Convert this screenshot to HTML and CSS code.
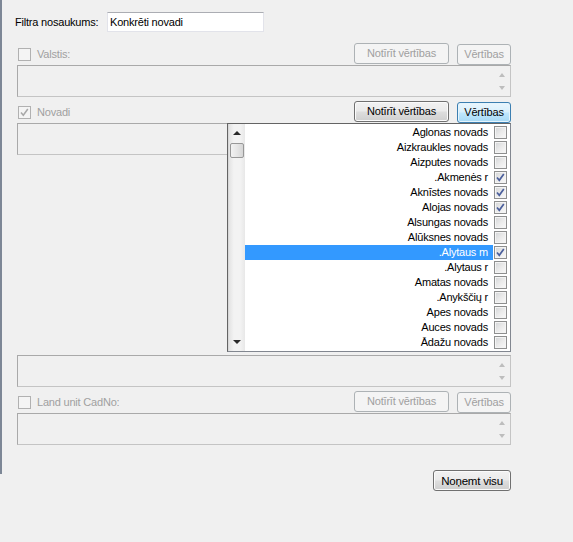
FILE: index.html
```html
<!DOCTYPE html>
<html>
<head>
<meta charset="utf-8">
<link rel="stylesheet" href="styles.css">
</head>
<body>
<div class="page">
  <div class="edge"></div>
  <div class="content">
    <div class="filter-row">
      <span class="filter-label">Filtra nosaukums:</span>
      <div class="input">Konkrēti novadi</div>
    </div>

    <div class="section first">
      <div class="header">
        <span class="cb dis"></span>
        <span class="hlabel dis-text">Valstis:</span>
        <span class="btn dis btn-clear">Notīrīt vērtības</span>
        <span class="btn dis btn-vals">Vērtības</span>
      </div>
      <div class="box"><div class="arrows"><span class="up"></span><span class="down"></span></div></div>
    </div>

    <div class="section">
      <div class="header">
        <span class="cb dis"><svg width="11" height="11" viewBox="0 0 11 11"><path d="M2 5.5 L4.3 8.3 L8.8 2" fill="none" stroke="#a8a8a8" stroke-width="1.5"/></svg></span>
        <span class="hlabel dis-text">Novadi</span>
        <span class="btn en btn-clear">Notīrīt vērtības</span>
        <span class="btn focus btn-vals">Vērtības</span>
      </div>
      <div class="box-wrap">
        <div class="box"></div>
        <div class="popup">
          <div class="vscroll">
            <span class="sarrow up-dark"></span>
            <span class="thumb"></span>
            <span class="sarrow down-dark"></span>
          </div>
          <div class="items">
            <div class="item"><span class="itext">Aglonas novads</span><span class="icb"><span class="cb lst"></span></span></div>
            <div class="item"><span class="itext">Aizkraukles novads</span><span class="icb"><span class="cb lst"></span></span></div>
            <div class="item"><span class="itext">Aizputes novads</span><span class="icb"><span class="cb lst"></span></span></div>
            <div class="item"><span class="itext">.Akmenės r</span><span class="icb"><span class="cb lst"><svg width="11" height="11" viewBox="0 0 11 11"><path d="M2 5.5 L4.3 8.3 L8.8 2" fill="none" stroke="#4b5f9c" stroke-width="1.7"/></svg></span></span></div>
            <div class="item"><span class="itext">Aknīstes novads</span><span class="icb"><span class="cb lst"><svg width="11" height="11" viewBox="0 0 11 11"><path d="M2 5.5 L4.3 8.3 L8.8 2" fill="none" stroke="#4b5f9c" stroke-width="1.7"/></svg></span></span></div>
            <div class="item"><span class="itext">Alojas novads</span><span class="icb"><span class="cb lst"><svg width="11" height="11" viewBox="0 0 11 11"><path d="M2 5.5 L4.3 8.3 L8.8 2" fill="none" stroke="#4b5f9c" stroke-width="1.7"/></svg></span></span></div>
            <div class="item"><span class="itext">Alsungas novads</span><span class="icb"><span class="cb lst"></span></span></div>
            <div class="item"><span class="itext">Alūksnes novads</span><span class="icb"><span class="cb lst"></span></span></div>
            <div class="item sel"><span class="itext">.Alytaus m</span><span class="icb"><span class="cb lst"><svg width="11" height="11" viewBox="0 0 11 11"><path d="M2 5.5 L4.3 8.3 L8.8 2" fill="none" stroke="#4b5f9c" stroke-width="1.7"/></svg></span></span></div>
            <div class="item"><span class="itext">.Alytaus r</span><span class="icb"><span class="cb lst"></span></span></div>
            <div class="item"><span class="itext">Amatas novads</span><span class="icb"><span class="cb lst"></span></span></div>
            <div class="item"><span class="itext">.Anykščių r</span><span class="icb"><span class="cb lst"></span></span></div>
            <div class="item"><span class="itext">Apes novads</span><span class="icb"><span class="cb lst"></span></span></div>
            <div class="item"><span class="itext">Auces novads</span><span class="icb"><span class="cb lst"></span></span></div>
            <div class="item"><span class="itext">Ādažu novads</span><span class="icb"><span class="cb lst"></span></span></div>
          </div>
        </div>
      </div>
    </div>

    <div class="box lower"><div class="arrows"><span class="up"></span><span class="down"></span></div></div>

    <div class="section">
      <div class="header">
        <span class="cb dis"></span>
        <span class="hlabel dis-text">Land unit CadNo:</span>
        <span class="btn dis btn-clear">Notīrīt vērtības</span>
        <span class="btn dis btn-vals">Vērtības</span>
      </div>
      <div class="box"><div class="arrows"><span class="up"></span><span class="down"></span></div></div>
    </div>

    <div class="footer">
      <span class="btn en btn-remove">Noņemt visu</span>
    </div>
  </div>
</div>
</body>
</html>
```

FILE: styles.css
```css
html, body {
  margin: 0;
  padding: 0;
  background: #f0f0f0;
}
body {
  font-family: "Liberation Sans", Arial, sans-serif;
  font-size: 11px;
  letter-spacing: -0.2px;
  color: #000;
  width: 573px;
  height: 542px;
  overflow: hidden;
}
.page {
  display: flex;
  align-items: flex-start;
}
.edge {
  width: 2px;
  height: 474px;
  background: #7d8796;
  flex: none;
}
.content {
  width: 494px;
  padding-left: 15px;
}
.filter-row {
  display: flex;
  align-items: center;
  margin-top: 12px;
  margin-left: -2px;
  height: 20px;
}
.filter-label {
  width: 92px;
}
.input {
  box-sizing: border-box;
  width: 157px;
  height: 20px;
  background: #fff;
  border: 1px solid #e2e3ea;
  border-top-color: #abadb3;
  padding: 2px 0 0 2px;
  line-height: 14px;
}
.section {
  margin-top: 3px;
}
.section.first {
  margin-top: 10px;
}
.header {
  display: flex;
  align-items: center;
  height: 23px;
}
.cb {
  box-sizing: border-box;
  width: 13px;
  height: 13px;
  display: inline-flex;
  align-items: center;
  justify-content: center;
  flex: none;
}
.header .cb {
  margin-left: 1px;
  margin-top: 1px;
}
.cb.dis {
  border: 1px solid #b1b1b1;
  background: #f4f4f4;
}
.cb.lst {
  border: 1px solid #8e8f8f;
  background: linear-gradient(135deg, #d2d4d6 0%, #eaeaea 50%, #fafafa 100%);
  box-shadow: inset 0 0 0 1px #f4f4f4;
}
.hlabel {
  margin-left: 6px;
  margin-top: 1px;
}
.dis-text {
  color: #a0a0a0;
}
.btn {
  box-sizing: border-box;
  height: 21px;
  display: inline-flex;
  align-items: center;
  justify-content: center;
  border-radius: 3px;
  flex: none;
}
.btn-clear {
  margin-left: auto;
  width: 95px;
  margin-top: -1px;
}
.btn-vals {
  margin-left: 8px;
  width: 54px;
  margin-top: 1px;
}
.btn.dis {
  border: 1px solid #adb2b5;
  background: #f4f4f4;
  color: #a0a0a0;
}
.btn.en {
  border: 1px solid #707070;
  background: linear-gradient(#f2f2f2 0%, #ebebeb 45%, #dddddd 55%, #cfcfcf 100%);
  box-shadow: inset 0 0 0 1px #fbfbfb;
}
.btn.focus {
  border: 1px solid #3c7fb1;
  background: linear-gradient(#eaf6fd 0%, #d9f0fc 45%, #bee6fd 55%, #a7d9f5 100%);
  box-shadow: inset 0 0 0 1px #e5f4fc;
}
.box {
  box-sizing: border-box;
  height: 32px;
  border: 1px solid #a9a9a9;
  border-right-color: #c4c4c4;
  border-bottom-color: #c4c4c4;
  background: #f0f0f0;
  display: flex;
  justify-content: flex-end;
}
.box.lower {
  margin-top: 200px;
}
.arrows {
  width: 17px;
  position: relative;
}
.arrows span {
  position: absolute;
  left: 6px;
  width: 0;
  height: 0;
  border-left: 3.5px solid transparent;
  border-right: 3.5px solid transparent;
}
.arrows .up {
  top: 7px;
  border-bottom: 4px solid #bdbdbd;
}
.arrows .down {
  top: 20px;
  border-top: 4px solid #bdbdbd;
}
.box-wrap {
  position: relative;
}
.popup {
  position: absolute;
  top: 0;
  left: 210px;
  box-sizing: border-box;
  width: 284px;
  height: 229px;
  background: #fff;
  border: 1px solid #646464;
  border-right-color: #828790;
  border-bottom-color: #828790;
  display: flex;
}
.vscroll {
  width: 17px;
  flex: none;
  position: relative;
  background: linear-gradient(to right, #e3e3e3 0%, #f3f3f3 30%, #f3f3f3 70%, #e8e8e8 100%);
  border-left: 1px solid #d8d8d8;
  box-sizing: border-box;
}
.sarrow {
  position: absolute;
  left: 4px;
  width: 0;
  height: 0;
  border-left: 4px solid transparent;
  border-right: 4px solid transparent;
}
.up-dark {
  top: 7px;
  border-bottom: 4px solid #2a2a2a;
}
.down-dark {
  bottom: 7px;
  border-top: 4px solid #2a2a2a;
}
.thumb {
  position: absolute;
  top: 19px;
  left: 1px;
  width: 14px;
  height: 15px;
  box-sizing: border-box;
  border: 1px solid #989898;
  border-radius: 2px;
  background: linear-gradient(to right, #f2f2f2 0%, #e6e6e6 50%, #d6d6d6 100%);
}
.items {
  flex: 1;
  padding-top: 1px;
}
.item {
  display: flex;
  height: 15px;
  align-items: center;
}
.itext {
  flex: 1;
  height: 15px;
  line-height: 15px;
  text-align: right;
  padding-right: 5px;
  white-space: nowrap;
}
.item.sel .itext {
  background: #3399ff;
  color: #fff;
}
.icb {
  width: 16px;
  flex: none;
  display: flex;
  padding-left: 1px;
}
.footer {
  display: flex;
  justify-content: flex-end;
  margin-top: 25px;
}
.btn-remove {
  width: 78px;
  height: 21px;
  font-size: 11.5px;
}
```
